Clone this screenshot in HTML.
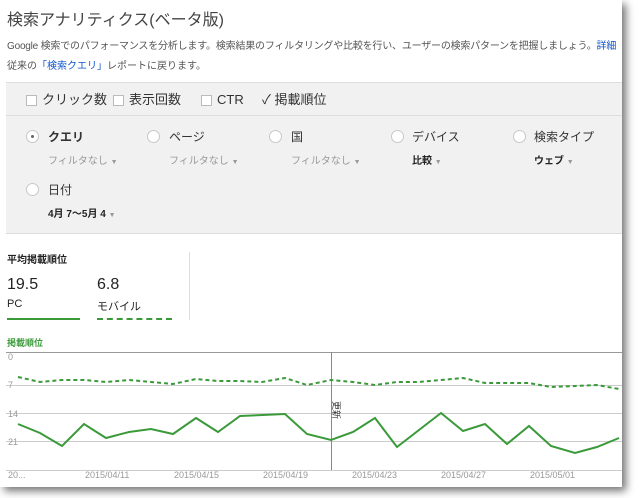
<!DOCTYPE html>
<html><head><meta charset="utf-8"><style>
body{margin:0;width:640px;height:498px;background:#fff;font-family:"Liberation Sans","Noto Sans CJK JP",sans-serif;position:relative;overflow:hidden;color:#222}
.card{position:absolute;left:0;top:0;width:622px;height:487px;background:#fff;box-shadow:4px 4px 8px rgba(0,0,0,.55)}
.a{position:absolute;white-space:nowrap}
.gray{position:absolute;left:6px;top:82px;width:616px;height:150px;background:#f1f1f1;border-top:1px solid #ddd;border-bottom:1px solid #ddd}
.ck{position:absolute;top:8px;height:18px;line-height:18px;font-size:13px;color:#333;display:flex;align-items:center;white-space:nowrap}
.cb{display:inline-block;width:9px;height:9px;border:1px solid #bbb;background:#fff;margin-right:5px}
.rd{position:absolute;width:11px;height:11px;border:1px solid #c8c8c8;border-radius:50%;background:#fff}
.sub{font-size:10px;color:#999}
.tri{font-size:7px;color:#999}
.lb{font-size:12px;color:#333;top:45px}
</style></head><body>
<div class="card">
<div class="a" style="left:7px;top:6px;font-size:16px;color:#444">検索アナリティクス(ベータ版)</div>
<div class="a" style="left:7px;top:37px;font-size:10px;color:#555;letter-spacing:-0.2px">Google 検索でのパフォーマンスを分析します。検索結果のフィルタリングや比較を行い、ユーザーの検索パターンを把握しましょう。<span style="color:#15c">詳細</span></div>
<div class="a" style="left:7px;top:57px;font-size:10px;color:#555">従来の<span style="color:#15c">「検索クエリ」</span>レポートに戻ります。</div>
<div class="gray">
 <div style="position:absolute;left:0;right:0;top:32px;border-top:1px solid #ddd"></div>
 <div class="ck" style="left:20px"><span class="cb"></span>クリック数</div>
 <div class="ck" style="left:107px"><span class="cb"></span>表示回数</div>
 <div class="ck" style="left:195px"><span class="cb"></span>CTR</div>
 <div class="ck" style="left:256px">✓ 掲載順位</div>
 <div class="rd" style="left:20px;top:47px"><div style="position:absolute;left:4px;top:4px;width:3px;height:3px;border-radius:50%;background:#666"></div></div>
 <div class="a lb" style="left:42px;font-weight:bold">クエリ</div>
 <div class="a sub" style="left:42px;top:69px">フィルタなし <span class="tri">▼</span></div>
 <div class="rd" style="left:141px;top:47px"></div>
 <div class="a lb" style="left:163px">ページ</div>
 <div class="a sub" style="left:163px;top:69px">フィルタなし <span class="tri">▼</span></div>
 <div class="rd" style="left:263px;top:47px"></div>
 <div class="a lb" style="left:285px">国</div>
 <div class="a sub" style="left:285px;top:69px">フィルタなし <span class="tri">▼</span></div>
 <div class="rd" style="left:385px;top:47px"></div>
 <div class="a lb" style="left:406px">デバイス</div>
 <div class="a sub" style="left:406px;top:69px;color:#222;font-weight:bold">比較 <span class="tri">▼</span></div>
 <div class="rd" style="left:507px;top:47px"></div>
 <div class="a lb" style="left:528px">検索タイプ</div>
 <div class="a sub" style="left:528px;top:69px;color:#222;font-weight:bold">ウェブ <span class="tri">▼</span></div>
 <div class="rd" style="left:20px;top:100px"></div>
 <div class="a lb" style="left:42px;top:98px">日付</div>
 <div class="a sub" style="left:42px;top:122px;color:#222;font-weight:bold">4月 7〜5月 4 <span class="tri">▼</span></div>
</div>
<div class="a" style="left:7px;top:251px;font-size:10px;font-weight:bold">平均掲載順位</div>
<div class="a" style="left:7px;top:276px;font-size:16px">19.5</div>
<div class="a" style="left:7px;top:298px;font-size:11px">PC</div>
<div class="a" style="left:97px;top:276px;font-size:16px">6.8</div>
<div class="a" style="left:97px;top:298px;font-size:11px">モバイル</div>
<div style="position:absolute;left:7px;top:318px;width:73px;border-top:2px solid #3a9a3a"></div>
<div style="position:absolute;left:97px;top:318px;width:75px;border-top:2px dashed #3a9a3a"></div>
<div style="position:absolute;left:189px;top:252px;height:68px;border-left:1px solid #ddd"></div>
<div class="a" style="left:7px;top:336px;font-size:9px;color:#3a9a3a;font-weight:bold">掲載順位</div>
<svg class="a" style="left:0;top:345px" width="622" height="142">
<g stroke="#ccc" stroke-width="1">
<line x1="6" y1="7.5" x2="622" y2="7.5" stroke="#999"/>
<line x1="6" y1="40.5" x2="622" y2="40.5"/>
<line x1="6" y1="68.5" x2="622" y2="68.5"/>
<line x1="6" y1="96.5" x2="622" y2="96.5"/>
<line x1="6" y1="125.5" x2="622" y2="125.5"/>
</g>
<line x1="331.5" y1="7" x2="331.5" y2="125" stroke="#888"/>
<g font-size="9" fill="#999">
<text x="8" y="15">0</text><text x="8" y="43">7</text><text x="8" y="72">14</text><text x="8" y="100">21</text>
<text x="8" y="133">20...</text><text x="85" y="133">2015/04/11</text><text x="174" y="133">2015/04/15</text><text x="263" y="133">2015/04/19</text><text x="352" y="133">2015/04/23</text><text x="441" y="133">2015/04/27</text><text x="530" y="133">2015/05/01</text>
</g>
<text x="333" y="56" font-size="9" fill="#333" transform="rotate(90 333 56)">更新</text>
<polyline fill="none" stroke="#3a9a3a" stroke-width="2" points="18,79 40,88 62,101 84,79 106,93 129,87 151,84 173,89 196,73 218,87 240,71 285,69 307,89 331,95 353,87 375,73 397,102 441,68 463,86 485,79 507,99 529,81 551,101 575,108 597,102 619,93"/>
<polyline fill="none" stroke="#3a9a3a" stroke-width="2" stroke-dasharray="4,3" points="18,32 40,37 62,35 84,35 106,37 129,35 151,37 173,39 196,34 218,36 240,36 262,37 285,33 307,40 331,35 353,37 375,40 397,37 419,37 441,35 463,33 485,38 507,38 529,38 551,42 575,41 597,40 619,44"/>
</svg>
</div>
</body></html>
